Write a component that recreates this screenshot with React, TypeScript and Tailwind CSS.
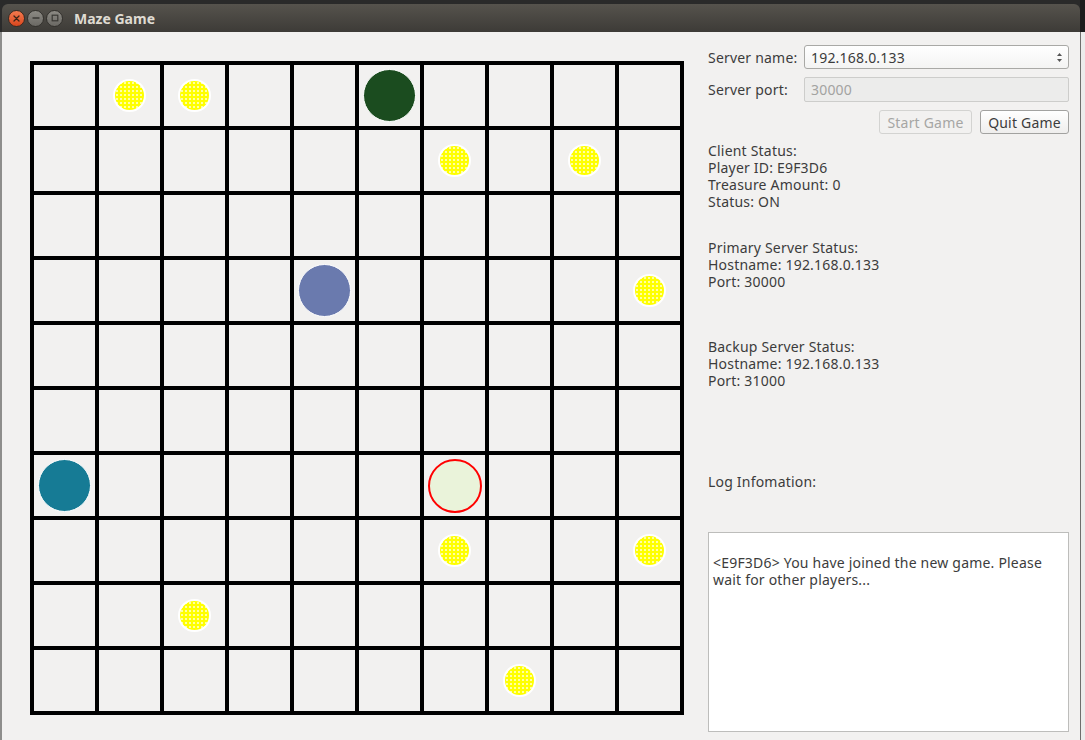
import React from 'react';

const FONT = { fontFamily: '"Noto Sans", "Open Sans", sans-serif' };

type Token = 'gold' | 'green' | 'blue' | 'teal' | 'me';

// board state, keyed by "row-col"
const tokens: Record<string, Token> = {
  '0-1': 'gold',
  '0-2': 'gold',
  '0-5': 'green',
  '1-6': 'gold',
  '1-8': 'gold',
  '3-4': 'blue',
  '3-9': 'gold',
  '6-0': 'teal',
  '6-6': 'me',
  '7-6': 'gold',
  '7-9': 'gold',
  '8-2': 'gold',
  '9-7': 'gold',
};

function Piece({ kind }: { kind: Token }) {
  if (kind === 'gold') {
    return (
      <div className="w-[33px] h-[33px] rounded-full border-2 border-white bg-[#ffff00] bg-[radial-gradient(circle,#ffffa8_0.7px,transparent_1px)] bg-[length:4px_4px]" />
    );
  }
  if (kind === 'me') {
    return <div className="w-[54px] h-[54px] rounded-full border-2 border-[#ff0000] bg-[#eaf3da]" />;
  }
  const color =
    kind === 'green' ? 'bg-[#1b4c1f]' : kind === 'blue' ? 'bg-[#6a7aae]' : 'bg-[#167b95]';
  return <div className={`w-[53px] h-[53px] rounded-full border border-white ${color}`} />;
}

function Board() {
  const cells = Array.from({ length: 100 }, (_, i) => i);
  return (
    <div className="mt-[29px] grid grid-cols-[repeat(10,61px)] grid-rows-[repeat(10,61px)] gap-[4px] p-[4px] bg-black w-fit h-fit">
      {cells.map((i) => {
        const key = `${Math.floor(i / 10)}-${i % 10}`;
        const t = tokens[key];
        return (
          <div key={i} className="w-[61px] h-[61px] bg-[#f2f1f0] flex items-center justify-center">
            {t && <Piece kind={t} />}
          </div>
        );
      })}
    </div>
  );
}

function TitleBar() {
  return (
    <div className="h-[28px] shrink-0 rounded-t-[6px] bg-gradient-to-b from-[#56534d] to-[#3d3b37] flex items-center pl-[6px]">
      <div className="flex items-center gap-[2px]">
        <div className="w-[17px] h-[17px] rounded-full border border-[#3a2a22] bg-gradient-to-b from-[#f47a4e] to-[#d9461c] flex items-center justify-center">
          <svg width="7" height="7" viewBox="0 0 7 7">
            <path d="M1 1L6 6M6 1L1 6" stroke="#3b2417" strokeWidth="1.3" strokeLinecap="round" />
          </svg>
        </div>
        <div className="w-[17px] h-[17px] rounded-full border border-[#33312d] bg-gradient-to-b from-[#8c8a84] to-[#6b6964] flex items-center justify-center">
          <svg width="8" height="8" viewBox="0 0 8 8">
            <path d="M1 4H7" stroke="#3a3935" strokeWidth="1.4" strokeLinecap="round" />
          </svg>
        </div>
        <div className="w-[17px] h-[17px] rounded-full border border-[#33312d] bg-gradient-to-b from-[#8c8a84] to-[#6b6964] flex items-center justify-center">
          <svg width="8" height="8" viewBox="0 0 8 8">
            <rect x="1.2" y="1.2" width="5.6" height="5.6" fill="none" stroke="#3a3935" strokeWidth="1.2" />
          </svg>
        </div>
      </div>
      <span className="ml-[11px] text-[14px] font-bold text-[#dfdbd2]" style={FONT}>
        Maze Game
      </span>
    </div>
  );
}

function SidePanel() {
  return (
    <div className="w-[361px] pt-[13px] text-[14px] tracking-[0.2px] leading-[17px] text-[#3c3c3c]" style={FONT}>
      <div className="flex items-center h-[24px]">
        <span className="w-[96px]">Server name:</span>
        <div className="flex-1 h-[24px] rounded-[3px] border border-[#a9a9a6] bg-gradient-to-b from-white to-[#f4f4f3] flex items-center justify-between pl-[6px] pr-[5px]">
          <span>192.168.0.133</span>
          <svg width="7" height="12" viewBox="0 0 7 12">
            <path d="M1 5L3.5 2L6 5Z" fill="#555" />
            <path d="M1 8L3.5 11L6 8Z" fill="#555" />
          </svg>
        </div>
      </div>
      <div className="flex items-center h-[25px] mt-[8px]">
        <span className="w-[96px]">Server port:</span>
        <div className="flex-1 h-[25px] rounded-[2px] border border-[#cdcdcb] bg-[#ececeb] flex items-center pl-[6px] text-[#a3a3a1]">
          30000
        </div>
      </div>
      <div className="flex justify-end gap-[8px] mt-[8px]">
        <div className="w-[93px] h-[24px] rounded-[3px] border border-[#d3d3d1] bg-[#f2f1f0] flex items-center justify-center text-[#a6a6a4]">
          Start Game
        </div>
        <div className="w-[89px] h-[24px] rounded-[3px] border border-[#a2a2a0] bg-gradient-to-b from-white to-[#efeeed] flex items-center justify-center">
          Quit Game
        </div>
      </div>

      <div className="mt-[8px]">
        <p>Client Status:</p>
        <p>Player ID: E9F3D6</p>
        <p>Treasure Amount: 0</p>
        <p>Status: ON</p>
      </div>
      <div className="mt-[29px]">
        <p>Primary Server Status:</p>
        <p>Hostname: 192.168.0.133</p>
        <p>Port: 30000</p>
      </div>
      <div className="mt-[48px]">
        <p>Backup Server Status:</p>
        <p>Hostname: 192.168.0.133</p>
        <p>Port: 31000</p>
      </div>
      <p className="mt-[84px]">Log Infomation:</p>
      <div className="mt-[42px] h-[200px] border border-[#bdbdbb] bg-white pl-[4px] pr-[14px] pt-[21px]">
        <p>&lt;E9F3D6&gt; You have joined the new game. Please wait for other players...</p>
      </div>
    </div>
  );
}

export default function App() {
  return (
    <div className="w-[1085px] h-[740px] overflow-hidden flex bg-[#2a2a2a]">
      <div className="w-[2px] mt-[32px] bg-[#8e8e8c]" />
      <div className="w-[1078px] pt-[4px] flex flex-col">
        <TitleBar />
        <div className="flex-1 bg-[#f2f1f0] flex items-start pl-[28px] gap-[24px]">
          <Board />
          <SidePanel />
        </div>
      </div>
      <div className="flex-1 flex flex-col">
        <div className="h-[32px] bg-[#1c1c1c]" />
        <div className="flex-1 border-l border-[#6e6e6c] bg-[#ececeb]" />
      </div>
    </div>
  );
}
